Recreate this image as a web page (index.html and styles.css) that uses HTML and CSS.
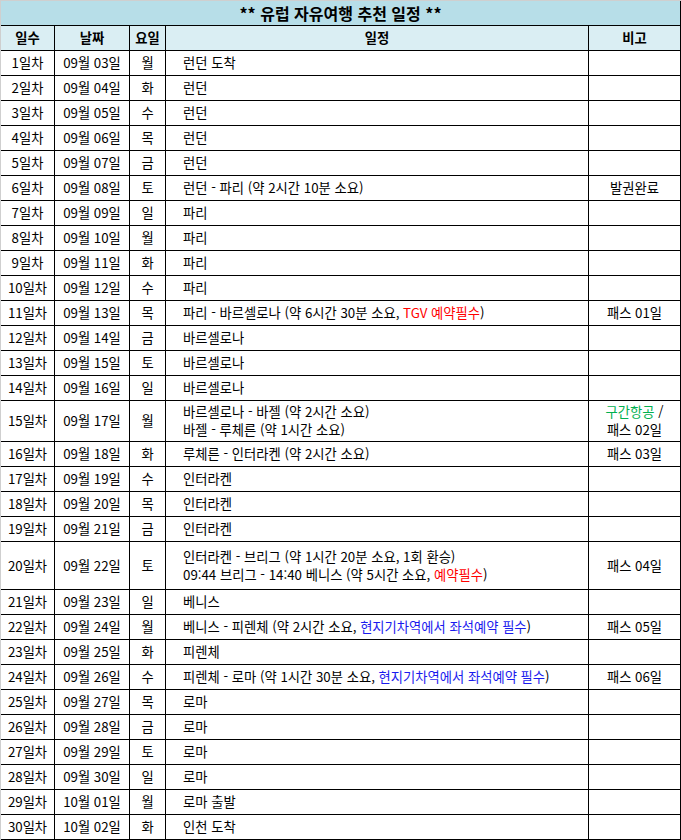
FILE: index.html
```html
<!DOCTYPE html>
<html lang="ko">
<head>
<meta charset="utf-8">
<title>유럽 자유여행 추천 일정</title>
<link rel="stylesheet" href="styles.css">
</head>
<body>
<div class="sheet">
  <div class="title">** 유럽 자유여행 추천 일정 **</div>
  <div class="row head">
    <div class="cell">일수</div><div class="cell">날짜</div><div class="cell">요일</div><div class="cell">일정</div><div class="cell">비고</div>
  </div>
  <div class="row"><div class="cell">1일차</div><div class="cell">09월 03일</div><div class="cell">월</div><div class="cell plan">런던 도착</div><div class="cell"></div></div>
  <div class="row"><div class="cell">2일차</div><div class="cell">09월 04일</div><div class="cell">화</div><div class="cell plan">런던</div><div class="cell"></div></div>
  <div class="row"><div class="cell">3일차</div><div class="cell">09월 05일</div><div class="cell">수</div><div class="cell plan">런던</div><div class="cell"></div></div>
  <div class="row"><div class="cell">4일차</div><div class="cell">09월 06일</div><div class="cell">목</div><div class="cell plan">런던</div><div class="cell"></div></div>
  <div class="row"><div class="cell">5일차</div><div class="cell">09월 07일</div><div class="cell">금</div><div class="cell plan">런던</div><div class="cell"></div></div>
  <div class="row"><div class="cell">6일차</div><div class="cell">09월 08일</div><div class="cell">토</div><div class="cell plan">런던 - 파리 (약 2시간 10분 소요)</div><div class="cell">발권완료</div></div>
  <div class="row"><div class="cell">7일차</div><div class="cell">09월 09일</div><div class="cell">일</div><div class="cell plan">파리</div><div class="cell"></div></div>
  <div class="row"><div class="cell">8일차</div><div class="cell">09월 10일</div><div class="cell">월</div><div class="cell plan">파리</div><div class="cell"></div></div>
  <div class="row"><div class="cell">9일차</div><div class="cell">09월 11일</div><div class="cell">화</div><div class="cell plan">파리</div><div class="cell"></div></div>
  <div class="row"><div class="cell">10일차</div><div class="cell">09월 12일</div><div class="cell">수</div><div class="cell plan">파리</div><div class="cell"></div></div>
  <div class="row"><div class="cell">11일차</div><div class="cell">09월 13일</div><div class="cell">목</div><div class="cell plan">파리 - 바르셀로나 (약 6시간 30분 소요,&nbsp;<span class="red">TGV 예약필수</span>)</div><div class="cell">패스 01일</div></div>
  <div class="row"><div class="cell">12일차</div><div class="cell">09월 14일</div><div class="cell">금</div><div class="cell plan">바르셀로나</div><div class="cell"></div></div>
  <div class="row"><div class="cell">13일차</div><div class="cell">09월 15일</div><div class="cell">토</div><div class="cell plan">바르셀로나</div><div class="cell"></div></div>
  <div class="row"><div class="cell">14일차</div><div class="cell">09월 16일</div><div class="cell">일</div><div class="cell plan">바르셀로나</div><div class="cell"></div></div>
  <div class="row tall"><div class="cell">15일차</div><div class="cell">09월 17일</div><div class="cell">월</div><div class="cell plan"><div>바르셀로나 - 바젤 (약 2시간 소요)<br>바젤 - 루체른 (약 1시간 소요)</div></div><div class="cell"><div><span class="green">구간항공</span> /<br>패스 02일</div></div></div>
  <div class="row"><div class="cell">16일차</div><div class="cell">09월 18일</div><div class="cell">화</div><div class="cell plan">루체른 - 인터라켄 (약 2시간 소요)</div><div class="cell">패스 03일</div></div>
  <div class="row"><div class="cell">17일차</div><div class="cell">09월 19일</div><div class="cell">수</div><div class="cell plan">인터라켄</div><div class="cell"></div></div>
  <div class="row"><div class="cell">18일차</div><div class="cell">09월 20일</div><div class="cell">목</div><div class="cell plan">인터라켄</div><div class="cell"></div></div>
  <div class="row"><div class="cell">19일차</div><div class="cell">09월 21일</div><div class="cell">금</div><div class="cell plan">인터라켄</div><div class="cell"></div></div>
  <div class="row taller"><div class="cell">20일차</div><div class="cell">09월 22일</div><div class="cell">토</div><div class="cell plan"><div>인터라켄 - 브리그 (약 1시간 20분 소요, 1회 환승)<br>09:44 브리그 - 14:40 베니스 (약 5시간 소요, <span class="red">예약필수</span>)</div></div><div class="cell">패스 04일</div></div>
  <div class="row"><div class="cell">21일차</div><div class="cell">09월 23일</div><div class="cell">일</div><div class="cell plan">베니스</div><div class="cell"></div></div>
  <div class="row"><div class="cell">22일차</div><div class="cell">09월 24일</div><div class="cell">월</div><div class="cell plan">베니스 - 피렌체 (약 2시간 소요,&nbsp;<span class="blue">현지기차역에서 좌석예약 필수</span>)</div><div class="cell">패스 05일</div></div>
  <div class="row"><div class="cell">23일차</div><div class="cell">09월 25일</div><div class="cell">화</div><div class="cell plan">피렌체</div><div class="cell"></div></div>
  <div class="row"><div class="cell">24일차</div><div class="cell">09월 26일</div><div class="cell">수</div><div class="cell plan">피렌체 - 로마 (약 1시간 30분 소요,&nbsp;<span class="blue">현지기차역에서 좌석예약 필수</span>)</div><div class="cell">패스 06일</div></div>
  <div class="row"><div class="cell">25일차</div><div class="cell">09월 27일</div><div class="cell">목</div><div class="cell plan">로마</div><div class="cell"></div></div>
  <div class="row"><div class="cell">26일차</div><div class="cell">09월 28일</div><div class="cell">금</div><div class="cell plan">로마</div><div class="cell"></div></div>
  <div class="row"><div class="cell">27일차</div><div class="cell">09월 29일</div><div class="cell">토</div><div class="cell plan">로마</div><div class="cell"></div></div>
  <div class="row"><div class="cell">28일차</div><div class="cell">09월 30일</div><div class="cell">일</div><div class="cell plan">로마</div><div class="cell"></div></div>
  <div class="row"><div class="cell">29일차</div><div class="cell">10월 01일</div><div class="cell">월</div><div class="cell plan">로마 출발</div><div class="cell"></div></div>
  <div class="row"><div class="cell">30일차</div><div class="cell">10월 02일</div><div class="cell">화</div><div class="cell plan">인천 도착</div><div class="cell"></div></div>
</div>
</body>
</html>
```
FILE: styles.css
```css
html, body {
  margin: 0;
  padding: 0;
  background: #fff;
}

body {
  font-family: "Noto Sans CJK KR", "Noto Sans", sans-serif;
  font-size: 13.3px;
  color: #000;
}

.sheet {
  width: 681px;
  box-sizing: border-box;
  display: flex;
  flex-direction: column;
  gap: 1px;
  background: #000;
  border-left: 1px solid #cfcfcf;
  border-top: 1px solid #cfcfcf;
  padding: 0 1px 1px 0;
}

.title {
  height: 24px;
  background: #b7dee8;
  display: flex;
  align-items: center;
  justify-content: center;
  font-weight: bold;
  font-size: 16px;
  line-height: 18px;
}

.row {
  display: grid;
  grid-template-columns: 53px 74px 35px 422px 91px;
  gap: 1px;
  height: 24px;
}

.row.tall {
  height: 40px;
}

.row.taller {
  height: 47px;
}

.cell {
  background: #fff;
  display: flex;
  align-items: center;
  justify-content: center;
  text-align: center;
  line-height: 18px;
  white-space: nowrap;
  overflow: hidden;
}

.cell.plan {
  justify-content: flex-start;
  text-align: left;
  padding-left: 17px;
}

.head .cell {
  background: #daeef3;
  font-weight: bold;
}

.red {
  color: #ff0000;
}

.green {
  color: #00b050;
}

.blue {
  color: #1a1aee;
}
```
